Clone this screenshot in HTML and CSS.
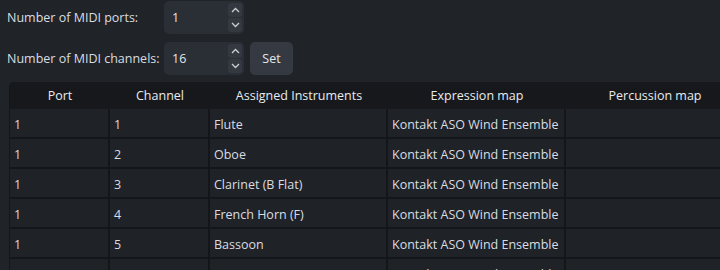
FILE: index.html
```html
<!DOCTYPE html>
<html lang="en">
<head>
  <meta charset="UTF-8">
  <title>MIDI Setup</title>
  <link rel="stylesheet" href="styles.css">
</head>
<body>
  <div class="settings">
    <div class="row">
      <label class="label" for="ports">Number of MIDI ports:</label>
      <div class="spinbox">
        <span class="value" id="ports">1</span>
        <div class="arrows">
          <span class="arrow">
            <svg width="9" height="6" viewBox="0 0 9 6"><path d="M1 5 L4.5 1.5 L8 5" fill="none" stroke="#c9ced4" stroke-width="1.3"/></svg>
          </span>
          <span class="arrow">
            <svg width="9" height="6" viewBox="0 0 9 6"><path d="M1 1 L4.5 4.5 L8 1" fill="none" stroke="#c9ced4" stroke-width="1.3"/></svg>
          </span>
        </div>
      </div>
    </div>
    <div class="row">
      <label class="label" for="channels">Number of MIDI channels:</label>
      <div class="spinbox">
        <span class="value" id="channels">16</span>
        <div class="arrows">
          <span class="arrow">
            <svg width="9" height="6" viewBox="0 0 9 6"><path d="M1 5 L4.5 1.5 L8 5" fill="none" stroke="#c9ced4" stroke-width="1.3"/></svg>
          </span>
          <span class="arrow">
            <svg width="9" height="6" viewBox="0 0 9 6"><path d="M1 1 L4.5 4.5 L8 1" fill="none" stroke="#c9ced4" stroke-width="1.3"/></svg>
          </span>
        </div>
      </div>
      <button class="set-btn">Set</button>
    </div>
  </div>

  <div class="table-frame">
    <table class="channels">
      <colgroup>
        <col class="col-narrow">
        <col class="col-narrow">
        <col class="col-wide">
        <col class="col-wide">
        <col class="col-wide">
      </colgroup>
      <thead>
        <tr>
          <th>Port</th>
          <th>Channel</th>
          <th>Assigned Instruments</th>
          <th>Expression map</th>
          <th>Percussion map</th>
        </tr>
      </thead>
      <tbody>
        <tr><td>1</td><td>1</td><td>Flute</td><td>Kontakt ASO Wind Ensemble</td><td></td></tr>
        <tr><td>1</td><td>2</td><td>Oboe</td><td>Kontakt ASO Wind Ensemble</td><td></td></tr>
        <tr><td>1</td><td>3</td><td>Clarinet (B Flat)</td><td>Kontakt ASO Wind Ensemble</td><td></td></tr>
        <tr><td>1</td><td>4</td><td>French Horn (F)</td><td>Kontakt ASO Wind Ensemble</td><td></td></tr>
        <tr><td>1</td><td>5</td><td>Bassoon</td><td>Kontakt ASO Wind Ensemble</td><td></td></tr>
        <tr><td></td><td></td><td></td><td>Kontakt ASO Wind Ensemble</td><td></td></tr>
      </tbody>
    </table>
  </div>
</body>
</html>
```

FILE: styles.css
```css
html,
body {
  height: 270px;
  overflow: hidden;
}

body {
  margin: 0;
  padding: 1px 0 0 7px;
  background: #202327;
  color: #d9dde2;
  font-family: 'Open Sans', sans-serif;
  font-size: 12.5px;
}

.settings {
  display: flex;
  flex-direction: column;
  gap: 8px;
}

.row {
  display: flex;
  align-items: center;
}

.label {
  flex: 0 0 157px;
  white-space: nowrap;
}

.spinbox {
  display: flex;
  align-items: center;
  justify-content: space-between;
  width: 80px;
  height: 33px;
  box-sizing: border-box;
  padding: 0 2px 0 8px;
  background: #2a2e35;
  border-radius: 5px;
}

.value {
  color: #e4e7ea;
}

.arrows {
  display: flex;
  flex-direction: column;
  gap: 1px;
}

.arrow {
  display: flex;
  align-items: center;
  justify-content: center;
  width: 14px;
  height: 14px;
  background: #343941;
  border-radius: 3px;
}

.set-btn {
  margin-left: 6px;
  width: 43px;
  height: 33px;
  border: none;
  border-radius: 5px;
  background: #353a42;
  color: #e4e7ea;
  font-family: inherit;
  font-size: 12.5px;
  padding: 0;
}

.table-frame {
  margin: 7px 0 0 2px;
  width: 760px;
  overflow: hidden;
  border-radius: 5px 0 0 0;
  background: #141619;
  padding-left: 1px;
}

.channels {
  border-collapse: separate;
  border-spacing: 0;
  table-layout: fixed;
  width: 734px;
}

.col-narrow {
  width: 100px;
}

.col-wide {
  width: 178px;
}

.channels th {
  height: 27px;
  padding: 0;
  font-weight: normal;
  color: #e8ebee;
  background: #16181b;
  text-align: center;
  white-space: nowrap;
}

.channels td {
  height: 30px;
  padding: 3px 0 0 4px;
  box-sizing: border-box;
  background: #1f2227;
  border-right: 2px solid #141619;
  border-bottom: 2px solid #141619;
  color: #d9dde2;
  white-space: nowrap;
}
```
